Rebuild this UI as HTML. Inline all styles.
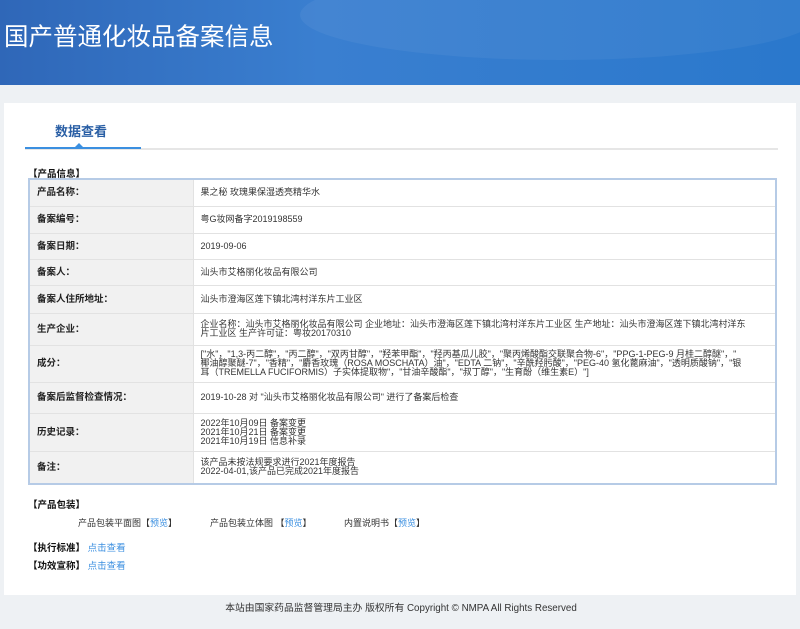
<!DOCTYPE html>
<html><head><meta charset="utf-8"><style>
*{margin:0;padding:0;box-sizing:border-box}
body{width:800px;height:629px;background:#eef1f4;font-family:"Liberation Sans","Noto Sans CJK SC",sans-serif;font-size:9px;color:#333;position:relative;overflow:hidden}
.hd{position:absolute;left:0;top:0;width:800px;height:85px;background:linear-gradient(90deg,#2f67b8 0%,#3a7fd0 40%,#2a78cc 100%);overflow:hidden}
.hd .c1{position:absolute;left:300px;top:-30px;width:520px;height:90px;border-radius:50%;background:rgba(255,255,255,.05)}
.hd h1{position:absolute;left:4px;top:18px;color:#fff;font-size:24.5px;font-weight:normal;font-family:"Noto Sans CJK SC",sans-serif;letter-spacing:0px}
.pn{position:absolute;left:4px;top:103px;width:792px;height:492px;background:#fff}
.tab{position:absolute;left:55px;top:121px;font-size:13px;font-weight:bold;color:#2a5fa5}
.ln{position:absolute;left:25px;top:148px;width:753px;height:2px;background:#e6e6e6}
.ln2{position:absolute;left:25px;top:147px;width:116px;height:2px;background:#3b8fe0}
.tri{position:absolute;left:75px;top:143px;border:4px solid transparent;border-bottom-color:#3b8fe0;border-top:0}
.sec{position:absolute;left:28px;font-weight:bold;color:#111;font-size:9.5px}
table{position:absolute;left:28px;top:178px;width:749px;border-collapse:collapse;border:2px solid #b6cbe6}
td{border:1px solid #e2e2e2;font-size:9px;line-height:9px;padding:0 7px;vertical-align:middle}
td.l{width:164px;background:#f1f1f1;font-weight:bold;color:#222;font-size:9.5px}
a{color:#3b8fe0;text-decoration:none}
.ft{position:absolute;left:0;top:600px;width:800px;text-align:center;font-size:9.8px;color:#333;padding-left:2px}
</style></head><body>
<div class="hd"><div class="c1"></div><h1>国产普通化妆品备案信息</h1></div>
<div class="pn"></div>
<div class="tab">数据查看</div>
<div class="ln"></div><div class="ln2"></div><div class="tri"></div>
<div class="sec" style="top:166px">【产品信息】</div>
<table>
<tr style="height:27px"><td class="l">产品名称：</td><td>果之秘 玫瑰果保湿透亮精华水</td></tr>
<tr style="height:27px"><td class="l">备案编号：</td><td>粤G妆网备字2019198559</td></tr>
<tr style="height:26px"><td class="l">备案日期：</td><td>2019-09-06</td></tr>
<tr style="height:26px"><td class="l">备案人：</td><td>汕头市艾格丽化妆品有限公司</td></tr>
<tr style="height:28px"><td class="l">备案人住所地址：</td><td>汕头市澄海区莲下镇北湾村洋东片工业区</td></tr>
<tr style="height:32px"><td class="l">生产企业：</td><td>企业名称：汕头市艾格丽化妆品有限公司 企业地址：汕头市澄海区莲下镇北湾村洋东片工业区 生产地址：汕头市澄海区莲下镇北湾村洋东<br>片工业区 生产许可证：粤妆20170310</td></tr>
<tr style="height:37px"><td class="l">成分：</td><td>["水"，"1,3-丙二醇"，"丙二醇"，"双丙甘醇"，"羟苯甲酯"，"羟丙基瓜儿胶"，"聚丙烯酸酯交联聚合物-6"，"PPG-1-PEG-9 月桂二醇醚"，"<br>椰油醇聚醚-7"，"香精"，"麝香玫瑰（ROSA MOSCHATA）油"，"EDTA 二钠"，"辛酰羟肟酸"，"PEG-40 氢化蓖麻油"，"透明质酸钠"，"银<br>耳（TREMELLA FUCIFORMIS）子实体提取物"，"甘油辛酸酯"，"叔丁醇"，"生育酚（维生素E）"]</td></tr>
<tr style="height:31px"><td class="l">备案后监督检查情况：</td><td>2019-10-28 对 "汕头市艾格丽化妆品有限公司" 进行了备案后检查</td></tr>
<tr style="height:38px"><td class="l">历史记录：</td><td>2022年10月09日 备案变更<br>2021年10月21日 备案变更<br>2021年10月19日 信息补录</td></tr>
<tr style="height:33px"><td class="l">备注：</td><td>该产品未按法规要求进行2021年度报告<br>2022-04-01,该产品已完成2021年度报告</td></tr>
</table>
<div class="sec" style="top:497px">【产品包装】</div>
<div style="position:absolute;left:78px;top:516px">产品包装平面图【<a>预览</a>】</div>
<div style="position:absolute;left:210px;top:516px">产品包装立体图 【<a>预览</a>】</div>
<div style="position:absolute;left:344px;top:516px">内置说明书【<a>预览</a>】</div>
<div class="sec" style="top:540px">【执行标准】 <a style="font-weight:normal">点击查看</a></div>
<div class="sec" style="top:558px">【功效宣称】 <a style="font-weight:normal">点击查看</a></div>
<div class="ft">本站由国家药品监督管理局主办 版权所有 Copyright © NMPA All Rights Reserved</div>
</body></html>
